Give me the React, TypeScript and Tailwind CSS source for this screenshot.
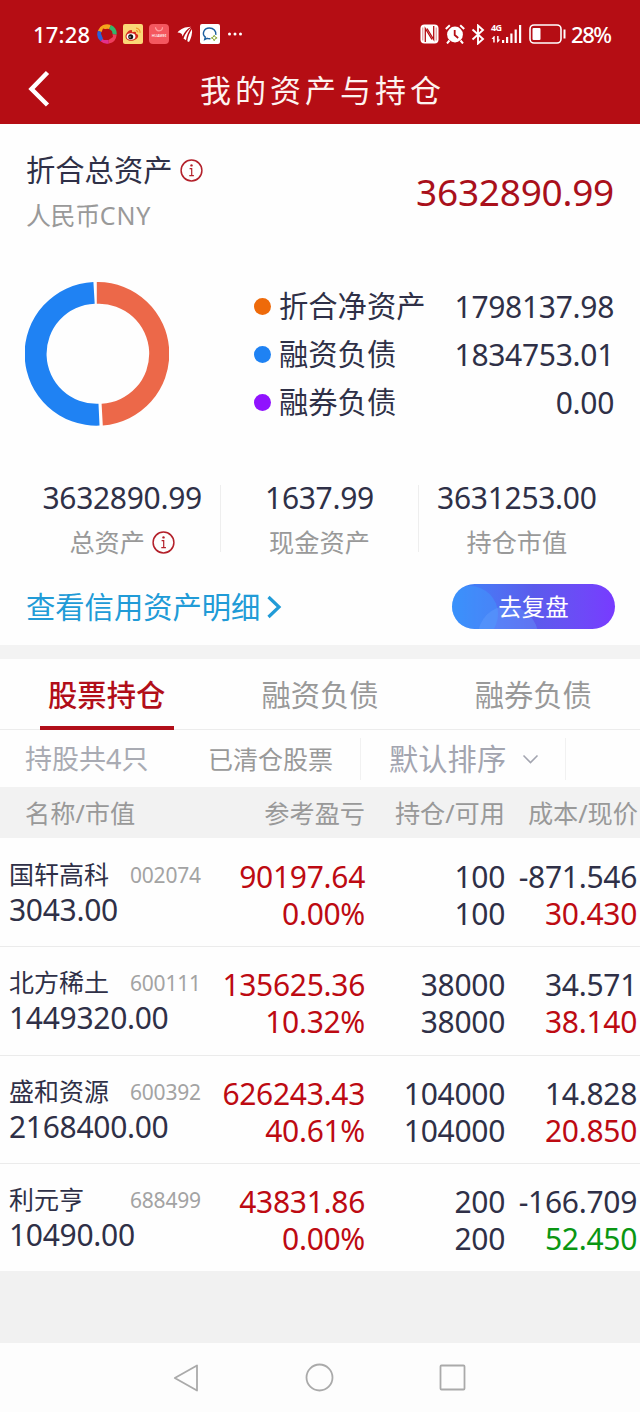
import type { ReactNode } from "react"

const legend = [
  { label: "折合净资产", value: "1798137.98", dot: "bg-[#ee6a0a]" },
  { label: "融资负债", value: "1834753.01", dot: "bg-[#1f82f3]" },
  { label: "融券负债", value: "0.00", dot: "bg-[#9013fe]" },
]

const stocks = [
  { name: "国轩高科", code: "002074", value: "3043.00", profit: "90197.64", rate: "0.00%", held: "100", free: "100", cost: "-871.546", price: "30.430", up: true },
  { name: "北方稀土", code: "600111", value: "1449320.00", profit: "135625.36", rate: "10.32%", held: "38000", free: "38000", cost: "34.571", price: "38.140", up: true },
  { name: "盛和资源", code: "600392", value: "2168400.00", profit: "626243.43", rate: "40.61%", held: "104000", free: "104000", cost: "14.828", price: "20.850", up: true },
  { name: "利元亨", code: "688499", value: "10490.00", profit: "43831.86", rate: "0.00%", held: "200", free: "200", cost: "-166.709", price: "52.450", up: false },
]

function InfoIcon() {
  return (
    <svg width="23" height="23" viewBox="0 0 23 23" fill="none" stroke="#b3202a">
      <circle cx="11.5" cy="11.5" r="10.4" strokeWidth="1.5" />
      <circle cx="11.5" cy="6.4" r="1.2" fill="#b3202a" stroke="none" />
      <path d="M9.6 9.7h2.1v6.8M9.3 16.7h4.6" strokeWidth="1.2" />
    </svg>
  )
}

function StatusBar() {
  return (
    <div className="flex h-[52px] items-center pt-4 text-[22px] leading-9 font-medium text-white">
      <span className="ml-[33px] w-16 tracking-[0.2px] whitespace-nowrap">17:28</span>
      <div className="flex items-center gap-[5px]">
        <svg width="20" height="20" viewBox="0 0 20 20" fill="none" strokeWidth="4.5">
          <path d="M3 7.500A7.500 7.500 0 0 1 13 3" stroke="#f6a51c" />
          <path d="M13 3A7.500 7.500 0 0 1 17.400 10.500" stroke="#35b56a" />
          <path d="M17.400 10.500A7.500 7.500 0 0 1 11.500 17.300" stroke="#ee3e5c" />
          <path d="M11.500 17.300A7.500 7.500 0 0 1 5 15.600" stroke="#e2308c" />
          <path d="M5 15.600A7.500 7.500 0 0 1 3 7.500" stroke="#2b62d9" />
          <path d="M6 4.500l9 2.500 1 6-4.500 3H6.500L4 9.500z" fill="#b50d14" />
        </svg>
        <svg className="ml-px" width="20" height="20" viewBox="0 0 20 20" fill="none">
          <rect width="20" height="20" rx="2" fill="#fbd777" />
          <path d="M13 4.2a4 4 0 0 1 4 4.6M13 6.6c1.2 0 1.8.8 1.7 1.8" stroke="#f19a2b" strokeWidth="1.2" />
          <path d="M2.500 12.500C2.500 9 7 4.800 8.800 6.200c.6.5.3 1.300.1 2 2-.9 4.800-.9 4.200 1.500 1.600.5 2.400 1.400 2 2.900-.7 2.700-4 4.200-7 4.200-3.300 0-5.600-1.800-5.600-4.300z" fill="#d52a1e" />
          <ellipse cx="8" cy="12.500" rx="4.400" ry="3.200" fill="#fff" />
          <circle cx="7.700" cy="12.700" r="2.500" fill="#141414" />
          <circle cx="7" cy="13" r=".7" fill="#fff" />
        </svg>
        <svg className="ml-px" width="20" height="20" viewBox="0 0 20 20" fill="none">
          <rect width="20" height="20" rx="4" fill="#f4575f" />
          <path d="M6.500 3.300a3.500 3.500 0 0 0 7 0" stroke="#ffa3a3" strokeWidth="1.200" />
          <text x="10" y="12.800" textAnchor="middle" fontSize="3.700" fill="#fff">HUAWEI</text>
        </svg>
        <svg className="ml-px" width="20" height="20" viewBox="0 0 20 20" fill="#fff">
          <path d="M2.500 8.500C6 4.500 10 3 16 2.800 12 5 9.500 8 7.500 12.500 7.300 9.500 5.500 8.500 2.500 8.500z" />
          <path d="M16.300 3.500C12.500 6.500 10 10 8.500 14.500l2.500 1.800C11.700 11.500 13.400 7.300 16.300 3.500z" />
          <path d="M17 5c-2.700 4-4 7.500-4.700 12.200l1.700.9C16.200 14 17.500 9.500 17 5z" />
        </svg>
        <svg width="20" height="20" viewBox="0 0 20 20" fill="none">
          <rect width="20" height="20" rx="2" fill="#fff" />
          <path d="M10.500 14.600c-1 .2-2.300.1-3.300-.3l-2.500 1.200.6-2.400C1.600 10 3.700 4 9.300 4c4.400 0 7 3.300 6.500 6.800" stroke="#1c5f9f" strokeWidth="1.400" />
          <path d="M14.200 11.200l.9 1.800 2 .9-2 .9-.9 2-.9-2-2-.9 2-.9z" stroke="#8ba93a" />
        </svg>
        <svg className="ml-[2px]" width="16" height="4" viewBox="0 0 16 4" fill="#fff">
          <circle cx="2.500" cy="2" r="1.500" />
          <circle cx="8" cy="2" r="1.500" />
          <circle cx="13.500" cy="2" r="1.500" />
        </svg>
      </div>
      <div className="mr-[29px] ml-auto flex items-center">
        <svg className="mr-[6px]" width="19" height="20" viewBox="0 0 19 20" fill="none">
          <rect x=".5" y=".5" width="18" height="19" rx="4" fill="#fff" />
          <path d="M5.300 18V4.500L12 15.500M13.700 2v13.500L7 4.500" stroke="#b50d14" strokeWidth="1.300" />
          <path d="M2.800 3.500v13M16.200 3.500v13" stroke="#b50d14" strokeWidth=".5" />
        </svg>
        <svg className="mr-[6px]" width="20" height="20" viewBox="0 0 20 20" fill="none">
          <circle cx="10" cy="10.500" r="7.900" fill="#fff" />
          <path d="M.8 5l4-3.700M19.200 5l-4-3.700M4.500 16.500l-2.500 3M15.500 16.500l2.500 3" stroke="#fff" strokeWidth="2" />
          <path d="M9.700 6v5l3.500 3" stroke="#b50d14" strokeWidth="1.800" />
        </svg>
        <svg className="mr-[6px]" width="14" height="21" viewBox="0 0 14 21" fill="none" stroke="#fff" strokeWidth="1.900">
          <path d="M1.500 5.500l10.500 9.500-5 4.500v-18l5 4.500L1.500 15.500" />
        </svg>
        <div className="mr-[6px] flex h-5 w-8 items-end">
          <div className="flex h-5 w-[11px] flex-col">
            <span className="-mt-[2px] h-3 text-[9px] leading-3 font-bold tracking-[-0.600px]">4G</span>
            <svg className="mt-[2px]" width="10" height="7" viewBox="0 0 10 7" fill="#fff">
              <path d="M3 0L.5 3h1.700v3.500h1.500V0zM6.800 6.500L9.300 3.500H7.600V0H6.100v6.500z" />
            </svg>
          </div>
          <svg width="20" height="20" viewBox="0 0 20 20" fill="#fff">
            <path d="M0 16h2.200v3H0zM4 13h2.200v6H4zM8.300 9.500h2.200V19H8.300zM12.600 5.500h2.200V19h-2.200zM17 1h2.200v18H17z" />
          </svg>
        </div>
        <svg className="mr-[5px]" width="37" height="20" viewBox="0 0 37 20" fill="none">
          <rect x="1" y="1" width="31" height="18" rx="4" stroke="#fff" strokeWidth="1.600" />
          <rect x="3.500" y="4" width="8" height="12" rx="1" fill="#fff" />
          <path d="M35.500 5.500v9" stroke="#fff" strokeWidth="2" />
        </svg>
        <span className="w-10 whitespace-nowrap tracking-[-1.400px]">28%</span>
      </div>
    </div>
  )
}

function AssetChart() {
  return (
    <svg width="144" height="144" viewBox="0 0 144 144">
      <path d="M71.800 0A71.800 71.800 0 0 1 77.800 143.400L76.600 121.700A50 50 0 0 0 71.800 21.800z" fill="#ec6849" />
      <path d="M68.400.1A71.800 71.800 0 0 0 74.500 143.600L73.500 121.800A50 50 0 0 1 69.700 21.800z" fill="#1f82f3" />
    </svg>
  )
}

function Stat({ value, children }: { value: string; children: ReactNode }) {
  return (
    <div className="flex flex-1 flex-col items-center">
      <div className="mt-px h-[23px] text-[30px] leading-[23px] tracking-[-0.300px]">{value}</div>
      <div className="mt-[21px] flex h-6 items-center text-[25.200px] leading-6 text-[#999]">{children}</div>
    </div>
  )
}

export default function App() {
  return (
    <div className="h-[1412px] w-[640px] overflow-hidden bg-[#fefefe] font-['Noto_Sans','Noto_Sans_CJK_SC',sans-serif] text-[#2f3047]">
      <header className="h-[124px] bg-[#b50d14]">
        <StatusBar />
        <div className="flex h-[72px] items-center">
          <svg className="ml-[27px]" width="24" height="38" viewBox="0 0 24 38" fill="none" stroke="#fff" strokeWidth="4.500">
            <path d="M20.500 3.500L4.500 20l16 16" />
          </svg>
          <h1 className="ml-[149px] pt-1 text-[31px] leading-9 tracking-[4px] text-[#fdf3f0]">我的资产与持仓</h1>
        </div>
      </header>

      <section className="h-[521px] px-[26px] pt-7">
        <div className="flex justify-between">
          <div>
            <div className="flex h-9 items-center gap-2 text-[29.300px] leading-9">
              折合总资产
              <InfoIcon />
            </div>
            <div className="mt-[9px] text-[25px] leading-9 tracking-[-0.400px] text-[#999]">
              人民币<span className="tracking-[0.800px]">CNY</span>
            </div>
          </div>
          <div className="pt-5 text-[37px] leading-[40px] tracking-[-0.250px] text-[#a9101b]">3632890.99</div>
        </div>

        <div className="mt-[49px] -ml-px flex h-[144px] items-center">
          <AssetChart />
          <div className="ml-[85px] flex-1">
            {legend.map((item) => (
              <div key={item.label} className="flex h-12 items-center">
                <span className={`mr-2 h-[17px] w-[17px] rounded-full ${item.dot}`} />
                <span className="text-[29.300px] leading-9">{item.label}</span>
                <span className="ml-auto pt-[2px] text-[30px] leading-9 tracking-[-0.300px]">{item.value}</span>
              </div>
            ))}
          </div>
        </div>

        <div className="-mr-px -ml-0.5 mt-[59px] flex h-[67px]">
          <Stat value="3632890.99">
            总资产<span className="ml-[7px]"><InfoIcon /></span>
          </Stat>
          <div className="w-px bg-[#eee]" />
          <Stat value="1637.99">现金资产</Stat>
          <div className="w-px bg-[#eee]" />
          <Stat value="3631253.00">持仓市值</Stat>
        </div>

        <div className="mt-8 flex h-[45px] items-center justify-between">
          <a className="flex items-center text-[29.300px] leading-9 text-[#219bd7]">
            查看信用资产明细
            <svg className="ml-[6px]" width="17" height="24" viewBox="0 0 17 24" fill="none" stroke="#219bd7" strokeWidth="3.200">
              <path d="M2.500 2L13 12 2.500 22" />
            </svg>
          </a>
          <button className="relative -mr-px h-[45px] w-[163px] overflow-hidden rounded-full bg-gradient-to-r from-[#3488fa] via-[#5a5bec] to-[#783aff] text-[23.500px] leading-[44px] text-white">
            <span className="absolute top-[2px] left-[-10px] h-[56px] w-[56px] rounded-full bg-[#3fa0ff]/40" />
            <span className="absolute top-[22px] left-[26px] h-[60px] w-[60px] rounded-full bg-[#6ba4ff]/35" />
            <span className="relative">去复盘</span>
          </button>
        </div>
      </section>

      <div className="h-[14px] bg-[#f3f3f3]" />

      <nav className="grid h-[71px] grid-cols-3 border-b border-[#ececec] text-center text-[29.300px] leading-[72px] text-[#999]">
        <div className="flex flex-col items-center text-[#b10e19]">
          <div className="h-[67px] font-medium">股票持仓</div>
          <div className="h-1 w-[134px] shrink-0 bg-[#b10e19]" />
        </div>
        <div>融资负债</div>
        <div>融券负债</div>
      </nav>

      <div className="flex h-[57px] items-center leading-9 text-[#999]">
        <span className="ml-[25px] w-[183px] pt-px text-[27px] text-[#a9abb3]">持股共4只</span>
        <span className="w-[152px] pt-px text-[25px]">已清仓股票</span>
        <span className="h-[42px] w-px bg-[#f1f1f1]" />
        <span className="ml-7 pt-px text-[29.300px] text-[#a3a5b0]">默认排序</span>
        <svg className="mt-px ml-4" width="17" height="11" viewBox="0 0 17 11" fill="none" stroke="#a3a5b0" strokeWidth="1.600">
          <path d="M1.500 1.500l7 7 7-7" />
        </svg>
        <span className="ml-[26px] h-[42px] w-px bg-[#f1f1f1]" />
      </div>

      <div className="flex h-[51px] bg-[#f2f2f2] text-right text-[25.200px] leading-[52px] text-[#999]">
        <div className="w-[205px] pl-[25px] text-left">名称/市值</div>
        <div className="w-[160px]">参考盈亏</div>
        <div className="w-[140px]">持仓/可用</div>
        <div className="w-[133px]">成本/现价</div>
      </div>

      {stocks.map((s, i) => (
        <div
          key={s.code}
          className={`flex h-[108.250px] border-t pt-[19px] text-right text-[30px] leading-[37px] tracking-[-0.300px] ${i === 0 ? "border-transparent" : "border-[#ebebeb]"}`}
        >
          <div className="-mt-[2px] w-[205px] pl-[9px] text-left">
            <div className="flex h-[35px] tracking-normal">
              <span className="w-[121px] text-[25px]">{s.name}</span>
              <span className="pt-px text-[21px] tracking-[-0.200px] text-[#a3a3a3]">{s.code}</span>
            </div>
            <div>{s.value}</div>
          </div>
          <div className="w-[160px] text-[#bd0a12]">
            <div>{s.profit}</div>
            <div>{s.rate}</div>
          </div>
          <div className="w-[140px]">
            <div>{s.held}</div>
            <div>{s.free}</div>
          </div>
          <div className="w-[132px]">
            <div>{s.cost}</div>
            <div className={s.up ? "text-[#bd0a12]" : "text-[#0a9612]"}>{s.price}</div>
          </div>
        </div>
      ))}

      <div className="h-[72px] bg-[#f1f1f1]" />

      <footer className="flex h-[69px] items-center bg-[#fdfdfd]">
        <svg className="ml-[173px]" width="27" height="30" viewBox="0 0 27 30" fill="none" stroke="#aaa" strokeWidth="1.800" strokeLinejoin="round">
          <path d="M24 2.500v25L1.800 15z" />
        </svg>
        <svg className="ml-[105px]" width="29" height="29" viewBox="0 0 29 29" fill="none" stroke="#aaa" strokeWidth="1.800">
          <circle cx="14.500" cy="14.500" r="13" />
        </svg>
        <svg className="ml-[105px]" width="27" height="27" viewBox="0 0 27 27" fill="none" stroke="#aaa" strokeWidth="1.800">
          <rect x="1.500" y="1.500" width="24" height="24" rx="1" />
        </svg>
      </footer>
    </div>
  )
}
